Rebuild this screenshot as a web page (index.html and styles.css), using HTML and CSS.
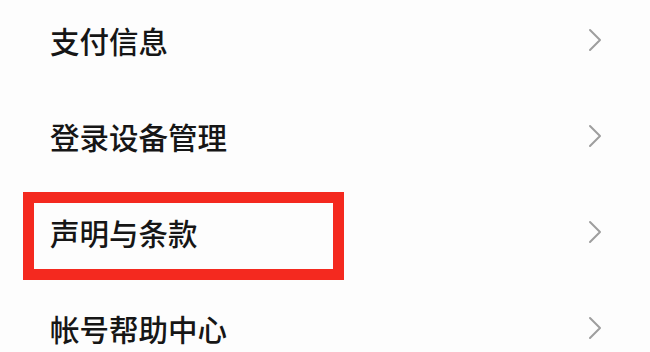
FILE: index.html
```html
<!DOCTYPE html>
<html lang="zh-CN">
<head>
  <meta charset="UTF-8" />
  <meta name="viewport" content="width=device-width, initial-scale=1.0"/>
  <title>设置</title>
  <link rel="stylesheet" href="styles.css">
</head>
<body>
  <ul class="menu">
    <li class="item">
      <span class="label">支付信息</span>
      <svg class="arrow" viewBox="0 0 14 24" width="14" height="24"><polyline points="2,2 12,12 2,22" /></svg>
    </li>
    <li class="item">
      <span class="label">登录设备管理</span>
      <svg class="arrow" viewBox="0 0 14 24" width="14" height="24"><polyline points="2,2 12,12 2,22" /></svg>
    </li>
    <li class="item marked">
      <span class="label">声明与条款</span>
      <svg class="arrow" viewBox="0 0 14 24" width="14" height="24"><polyline points="2,2 12,12 2,22" /></svg>
      <div class="highlight"></div>
    </li>
    <li class="item">
      <span class="label">帐号帮助中心</span>
      <svg class="arrow" viewBox="0 0 14 24" width="14" height="24"><polyline points="2,2 12,12 2,22" /></svg>
    </li>
  </ul>
</body>
</html>
```

FILE: styles.css
```css
* {
  box-sizing: border-box;
}

body {
  margin: 0;
  background: #fdfdfd;
  font-family: "Noto Sans CJK SC", "Noto Sans", sans-serif;
  overflow: hidden;
}

.menu {
  list-style: none;
  margin: -8px 0 0;
  padding: 0;
}

.item {
  position: relative;
  height: 96px;
  display: flex;
  align-items: center;
  justify-content: space-between;
  padding: 0 48px 0 50px;
}

.label {
  font-size: 29.5px;
  font-weight: 500;
  color: #161616;
  letter-spacing: 0;
}

.arrow {
  fill: none;
  stroke: #9e9e9e;
  stroke-width: 2;
  stroke-linecap: round;
  stroke-linejoin: round;
}

/* red annotation box */
.highlight {
  position: absolute;
  left: 23px;
  top: 8px;
  width: 321px;
  height: 88px;
  border: 11px solid #f4291f;
}
```
